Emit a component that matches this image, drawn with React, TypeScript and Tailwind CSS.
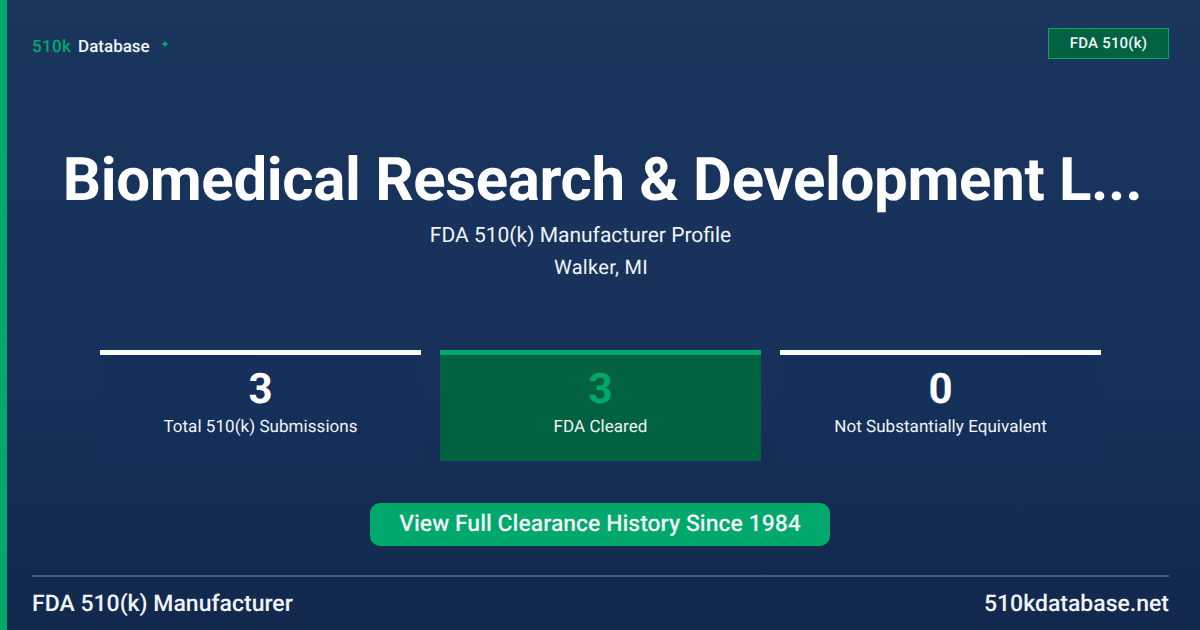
export default function App() {
  const stats = [
    { value: "3", label: "Total 510(k) Submissions", green: false },
    { value: "3", label: "FDA Cleared", green: true },
    { value: "0", label: "Not Substantially Equivalent", green: false },
  ];

  return (
    <div className="w-[1200px] h-[630px] overflow-hidden flex bg-gradient-to-b from-[#1a365d] via-[#17315a] via-60% to-[#12284d] font-['Roboto',sans-serif] text-white [text-rendering:geometricPrecision]">
      <div className="w-[7px] bg-[#00a86b] shrink-0" />
      <div className="flex-1 flex flex-col pl-[25px] pr-[31px]">
        {/* Header */}
        <div className="flex justify-between items-center pt-[28px] h-[59px]">
          <div className="flex items-center text-[17px] font-medium mt-[9px]">
            <span className="text-[#00a86b] tracking-[0.3px]">510k</span>
            <span className="ml-[7px] text-[#f0f4f8]">Database</span>
            <svg className="ml-[12px] mb-[8px]" width="6" height="6" viewBox="0 0 6 6">
              <path d="M2 0.5 H4 V2 H5.5 V4 H4 V5.5 H2 V4 H0.5 V2 H2 Z" fill="#00a86b" />
            </svg>
          </div>
          <div className="w-[121px] h-[31px] flex items-center justify-center bg-[#006241] border border-[#00a86b] text-[15px] tracking-[0.2px] font-medium text-[#f0f4f8]">
            FDA 510(k)
          </div>
        </div>

        {/* Title */}
        <div className="flex flex-col items-center mt-[85px]">
          <h1 className="text-[60px] leading-[72px] font-bold tracking-[-0.35px] whitespace-nowrap ml-[4px]">
            Biomedical Research &amp; Development L...
          </h1>
          <p className="text-[21px] leading-[32px] text-[#f0f4f8] mr-[40px] mt-[4px]">
            FDA 510(k) Manufacturer Profile
          </p>
          <p className="text-[20px] leading-[32px] tracking-[0.3px] text-[#f0f4f8] mr-[-1px] mt-[-1px]">
            Walker, MI
          </p>
        </div>

        {/* Stats */}
        <div className="flex justify-center gap-[19px] mt-[67px]">
          {stats.map((s) => (
            <div
              key={s.label}
              className={
                s.green
                  ? "w-[321px] h-[111px] flex flex-col items-center bg-[#006241] border-t-[5px] border-[#00a86b]"
                  : "w-[321px] h-[111px] flex flex-col items-center bg-[#14305a]/60 border-t-[5px] border-white"
              }
            >
              <div
                className={
                  s.green
                    ? "text-[42px] leading-[50px] font-bold mt-[10px] text-[#00a86b]"
                    : "text-[42px] leading-[50px] font-bold mt-[10px] text-white"
                }
              >
                {s.value}
              </div>
              <div className="text-[17px] leading-[24px] tracking-[0.05px] text-[#f0f4f8]">
                {s.label}
              </div>
            </div>
          ))}
        </div>

        {/* Button */}
        <div className="flex justify-center mt-[42px] mr-[1px]">
          <div className="w-[460px] h-[43px] rounded-[10px] bg-[#00a86b] flex items-center justify-center text-[23px] font-medium text-[#f0f4f8]">
            View Full Clearance History Since 1984
          </div>
        </div>

        {/* Footer */}
        <div className="mt-[29px] border-t-2 border-[#3d5a8c] flex justify-between items-center h-[55px] pt-[2px] text-[23px] font-medium text-[#f0f4f8]">
          <span>FDA 510(k) Manufacturer</span>
          <span>510kdatabase.net</span>
        </div>
      </div>
    </div>
  );
}
